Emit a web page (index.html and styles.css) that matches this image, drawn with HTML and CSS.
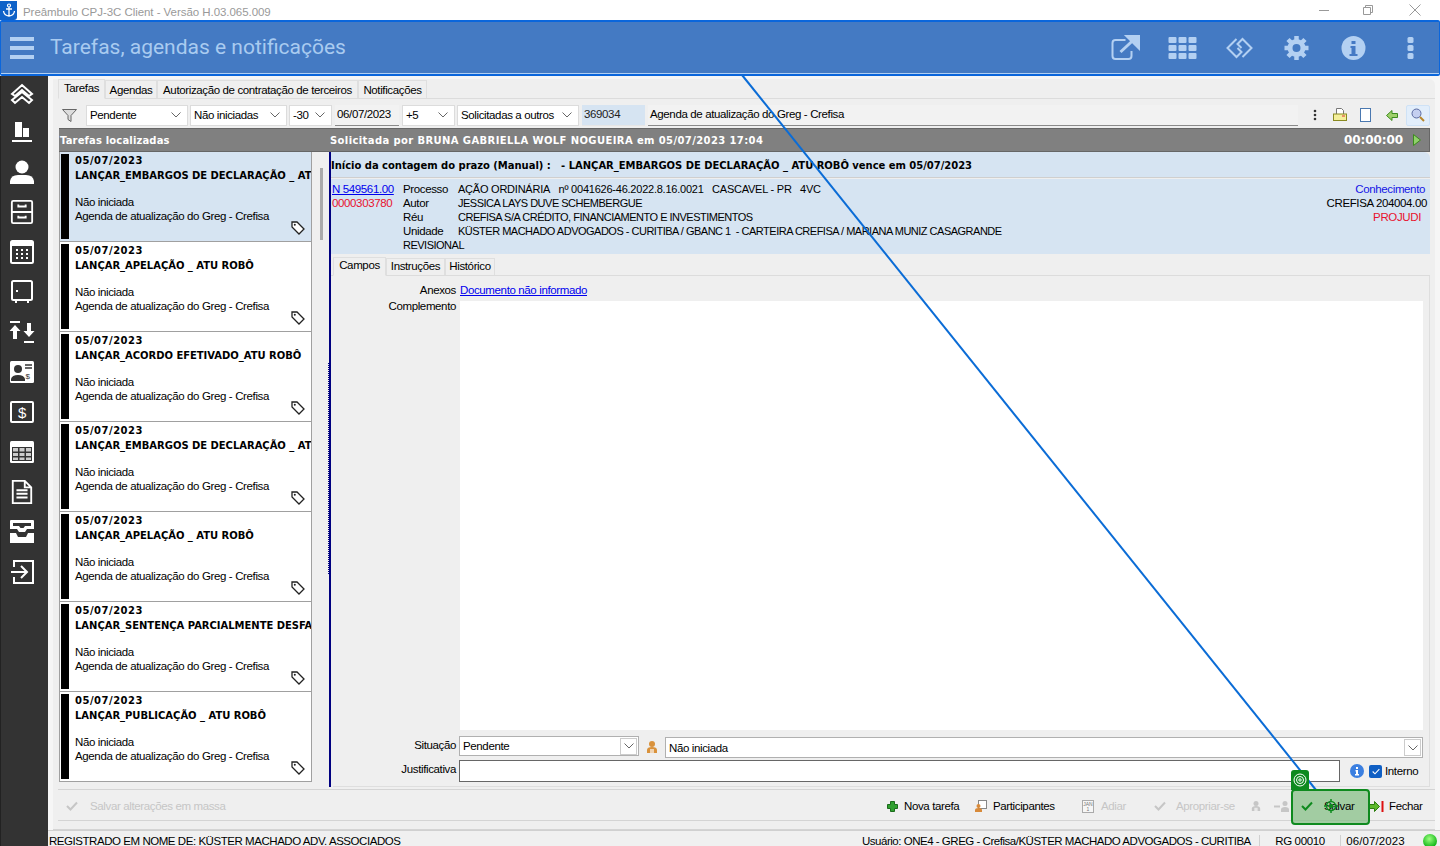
FILE: index.html
```html
<!doctype html>
<html>
<head>
<meta http-equiv="Content-Type" content="text/html; charset=utf-8">
<title>Preâmbulo CPJ-3C Client</title>
<link rel="stylesheet" href="styles.css">
</head>
<body>
<svg class="defs" width="0" height="0">
	<symbol id="chev" viewBox="0 0 12 8"><path d="M1.500 1.500l4.500 4.500 4.500-4.500" fill="none" stroke="#666" stroke-width="1"/></symbol>
	<symbol id="tag" viewBox="0 0 14 14"><path d="M1 1h5l7 7-5 5-7-7z" fill="#fff" stroke="#222" stroke-width="1.300"/><circle cx="3.800" cy="3.800" r="1" fill="#222"/></symbol>
	<symbol id="check" viewBox="0 0 12 10"><path d="M1 5l3.500 3.500 6.500-7" fill="none" stroke="currentColor" stroke-width="2"/></symbol>
	<symbol id="person" viewBox="0 0 12 14"><circle cx="6" cy="4" r="3" fill="currentColor"/><path d="M1 13v-3q0-3 5-3t5 3v3z" fill="currentColor"/><path d="M4 9h4v4H4z" fill="#fff" opacity=".6"/></symbol>
</svg>

<div class="titlebar">
	<div class="anchor"><svg width="14" height="14" viewBox="0 0 14 14"><circle cx="7" cy="2.500" r="1.500" fill="none" stroke="#fff" stroke-width="1.200"/><path d="M7 4v9M4 6h6M1.500 8q.5 4.500 5.500 5 5-.5 5.500-5" fill="none" stroke="#fff" stroke-width="1.300"/></svg></div>
	<span class="titlebar-text">Preâmbulo CPJ-3C Client - Versão H.03.065.009</span>
	<div class="winctl">
		<svg width="12" height="12" viewBox="0 0 12 12"><path d="M1 6.500h10" stroke="#999"/></svg>
		<svg width="12" height="12" viewBox="0 0 12 12"><path d="M1.500 3.500h7v7h-7zM3.500 3.500v-2h7v7h-2" fill="none" stroke="#999"/></svg>
		<svg width="12" height="12" viewBox="0 0 12 12"><path d="M.5.500l11 11M11.500.500l-11 11" stroke="#999"/></svg>
	</div>
</div>

<header class="appbar">
	<div class="burger"><i></i><i></i><i></i></div>
	<h1>Tarefas, agendas e notificações</h1>
	<div class="appbar-icons">
		<svg width="30" height="26" viewBox="0 0 30 26"><path d="M15 5H5q-3 0-3 3v13q0 3 3 3h13q3 0 3-3v-5" fill="none" stroke="#b3d0f2" stroke-width="2"/><path d="M10 17L24 4M17 1.500h11v11z" stroke="#b3d0f2" stroke-width="3" fill="#b3d0f2"/></svg>
		<svg width="28" height="22" viewBox="0 0 28 22" fill="#b3d0f2"><rect width="8" height="6" rx="1"/><rect x="10" width="8" height="6" rx="1"/><rect x="20" width="8" height="6" rx="1"/><rect y="8" width="8" height="6" rx="1"/><rect x="10" y="8" width="8" height="6" rx="1"/><rect x="20" y="8" width="8" height="6" rx="1"/><rect y="16" width="8" height="6" rx="1"/><rect x="10" y="16" width="8" height="6" rx="1"/><rect x="20" y="16" width="8" height="6" rx="1"/></svg>
		<svg width="28" height="24" viewBox="0 0 28 24" fill="none" stroke="#b3d0f2" stroke-width="2"><path d="M11 3L2 12l9 9 5-5-4-4M17 21l9-9-9-9-5 5 4 4"/></svg>
		<svg width="24" height="24" viewBox="0 0 24 24"><circle cx="12" cy="12" r="6.500" fill="none" stroke="#b3d0f2" stroke-width="5"/><path d="M12 0v24M0 12h24M3.500 3.500l17 17M20.500 3.500l-17 17" stroke="#b3d0f2" stroke-width="4.500" stroke-dasharray="4.500 15 4.500"/></svg>
		<svg width="24" height="24" viewBox="0 0 24 24"><circle cx="12" cy="12" r="12" fill="#b3d0f2"/><path d="M10 5h4v3h-4zM9 10h5v8h2v2H8v-2h2v-6H9z" fill="#4479c4"/></svg>
		<svg width="6" height="22" viewBox="0 0 6 22" fill="#b3d0f2"><rect width="6" height="6" rx="1.500"/><rect y="8" width="6" height="6" rx="1.500"/><rect y="16" width="6" height="6" rx="1.500"/></svg>
	</div>
</header>

<div class="main">
	<nav class="sidebar">
		<svg width="24" height="22" viewBox="0 0 24 22" fill="none" stroke="#fff" stroke-width="2"><path d="M2 11l10-9 10 9-3 2-7-6-7 6zM2 17l10-8 10 8-3 3-7-6-7 6z"/></svg>
		<svg width="20" height="20" viewBox="0 0 20 20" fill="#fff"><rect x="3" width="7" height="15"/><rect x="11" y="6" width="6" height="9"/><rect y="18" width="20" height="2"/></svg>
		<svg width="24" height="24" viewBox="0 0 24 24" fill="#fff"><circle cx="12" cy="7" r="6.500"/><path d="M0 24v-3q1-6 8-6h8q7 0 8 6v3z"/></svg>
		<svg width="24" height="26" viewBox="0 0 24 26" fill="none" stroke="#fff" stroke-width="2"><rect x="1" y="1" width="22" height="24" rx="1.500"/><path d="M1 13h22M8 5v2h8V5M8 17v2h8v-2"/></svg>
		<svg width="24" height="24" viewBox="0 0 24 24"><rect x="1" y="1" width="22" height="22" rx="1.500" fill="none" stroke="#fff" stroke-width="2"/><path d="M2 2h20v4H2z" fill="#fff"/><path d="M6 9h2v2H6zM11 9h2v2h-2zM16 9h2v2h-2zM6 13h2v2H6zM11 13h2v2h-2zM16 13h2v2h-2zM6 17h2v2H6zM11 17h2v2h-2zM16 17h2v2h-2z" fill="#fff"/></svg>
		<svg width="24" height="24" viewBox="0 0 24 24" fill="none" stroke="#fff" stroke-width="2"><rect x="2" y="1" width="20" height="19" rx="1.500"/><path d="M6 20v3M18 20v3"/><path d="M6 10h2v2H6z" fill="#fff" stroke="none"/></svg>
		<svg width="24" height="22" viewBox="0 0 24 22" fill="#fff"><path d="M0 0h10v2H0zM14 20h10v2H14zM5 4l5.500 6H7v8H3v-8H-.500zM17 2h4v8h3.500L19 16l-5.500-6H17z"/></svg>
		<svg width="24" height="22" viewBox="0 0 24 22"><rect width="24" height="22" rx="1.500" fill="#fff"/><circle cx="8" cy="8" r="4" fill="#333"/><path d="M1 20v-2q1-4 7-4t7 4v2z" fill="#333"/><path d="M15 4h7M15 7h7" stroke="#333" stroke-width="1.500"/><text class="icon-dollar" x="15.500" y="18">$</text></svg>
		<svg width="24" height="22" viewBox="0 0 24 22"><rect x="1" y="1" width="22" height="20" rx="1" fill="none" stroke="#fff" stroke-width="2"/><text class="icon-dollar-big" x="12" y="17">$</text></svg>
		<svg width="24" height="24" viewBox="0 0 24 24"><rect x="0" y="1" width="24" height="22" rx="1.500" fill="#fff"/><path d="M2 7h20v14H2z" fill="#333"/><path d="M3 8h5v3.500H3zM9.500 8h5v3.500h-5zM16 8h5v3.500h-5zM3 13h5v3H3zM9.500 13h5v3h-5zM16 13h5v3h-5zM3 17.500h5V20H3zM9.500 17.500h5V20h-5zM16 17.500h5V20h-5z" fill="#ccc"/></svg>
		<svg width="24" height="26" viewBox="0 0 24 26" fill="none" stroke="#fff" stroke-width="2"><path d="M2 1h13l7 7v17H2zM15 1v7h7"/><path d="M6 11h12M6 15h12M6 19h12" stroke-width="2.200"/></svg>
		<svg width="24" height="24" viewBox="0 0 24 24" fill="#fff"><path d="M1 0h22a1 1 0 0 1 1 1v8h-7l-2 3H9L7 9H0V1a1 1 0 0 1 1-1z"/><path d="M0 13h6l2 4h8l2-4h6v10H0z"/><path d="M3 3h18v3h-6l-1.500 2h-3L9 6H3z" fill="#333"/></svg>
		<svg width="24" height="24" viewBox="0 0 24 24" fill="none" stroke="#fff" stroke-width="2"><path d="M4 7V1h19v22H4v-6"/><path d="M1 12h15M11 6l6 6-6 6"/></svg>
	</nav>

	<div class="content">
		<div class="pane">
			<div class="tabs">
				<a class="tab tab-on">Tarefas</a>
				<a class="tab w-agendas">Agendas</a>
				<a class="tab w-autor">Autorização de contratação de terceiros</a>
				<a class="tab w-notif">Notificações</a>
			</div>

			<div class="filters">
				<svg class="funnel" width="15" height="13" viewBox="0 0 15 13"><path d="M.500.500h14L9 6.500v6l-3-2v-4z" fill="#ddd" stroke="#666"/></svg>
				<div class="sel f1"><span>Pendente</span><svg width="12" height="8"><use href="#chev"/></svg></div>
				<div class="sel f2"><span>Não iniciadas</span><svg width="12" height="8"><use href="#chev"/></svg></div>
				<div class="sel f3"><span>-30</span><svg width="12" height="8"><use href="#chev"/></svg></div>
				<div class="inp f4">06/07/2023</div>
				<div class="sel f5"><span>+5</span><svg width="12" height="8"><use href="#chev"/></svg></div>
				<div class="sel f6"><span>Solicitadas a outros</span><svg width="12" height="8"><use href="#chev"/></svg></div>
				<div class="inp f7">369034</div>
				<div class="inp f8">Agenda de atualização do Greg - Crefisa</div>
				<div class="tools">
					<svg width="4" height="12" viewBox="0 0 4 12" fill="#333"><circle cx="2" cy="2" r="1.300"/><circle cx="2" cy="6" r="1.300"/><circle cx="2" cy="10" r="1.300"/></svg>
					<svg width="14" height="14" viewBox="0 0 14 14"><path d="M3.500 6V.500h5l2 2V6" fill="#fff" stroke="#777"/><rect x=".500" y="6" width="13" height="6.500" fill="#f4ef9a" stroke="#8a8a20"/><path d="M9 8h3" stroke="#d33"/></svg>
					<svg width="12" height="15" viewBox="0 0 12 15"><rect x=".500" y=".500" width="10" height="13" fill="#fff" stroke="#4a78b0"/></svg>
					<svg width="12" height="11" viewBox="0 0 12 11"><path d="M.500 5.500L6 .500v3h5.500v4H6v3z" fill="#9ed06a" stroke="#3c8a1e"/></svg>
					<div class="searchbtn"><svg width="14" height="14" viewBox="0 0 14 14"><circle cx="5.500" cy="5.500" r="4.500" fill="#c4cff0" stroke="#5a6aa0"/><path d="M9 9l4 4" stroke="#b8862a" stroke-width="2"/></svg></div>
				</div>
			</div>

			<div class="darkbar">
				<b class="darkbar-left">Tarefas localizadas</b>
				<b class="darkbar-mid">Solicitada por BRUNA GABRIELLA WOLF NOGUEIRA em 05/07/2023 17:04</b>
				<b class="timer">00:00:00</b>
				<svg width="8" height="12" viewBox="0 0 8 12"><path d="M.500.500L7.500 6 .500 11.500z" fill="#8fd06a" stroke="#3c8a1e"/></svg>
			</div>

			<div class="split">
				<div class="list">
					<div class="item item-on">
						<div class="bar"></div>
						<div class="item-body">
							<b class="item-date">05/07/2023</b>
							<b>LANÇAR_EMBARGOS DE DECLARAÇÃO _ ATU ROBÔ</b>
							<span class="item-status">Não iniciada</span>
							<span>Agenda de atualização do Greg - Crefisa</span>
						</div>
						<svg class="tag" width="14" height="14"><use href="#tag"/></svg>
					</div>
					<div class="item">
						<div class="bar"></div>
						<div class="item-body">
							<b class="item-date">05/07/2023</b>
							<b>LANÇAR_APELAÇÃO _ ATU ROBÔ</b>
							<span class="item-status">Não iniciada</span>
							<span>Agenda de atualização do Greg - Crefisa</span>
						</div>
						<svg class="tag" width="14" height="14"><use href="#tag"/></svg>
					</div>
					<div class="item">
						<div class="bar"></div>
						<div class="item-body">
							<b class="item-date">05/07/2023</b>
							<b>LANÇAR_ACORDO EFETIVADO_ATU ROBÔ</b>
							<span class="item-status">Não iniciada</span>
							<span>Agenda de atualização do Greg - Crefisa</span>
						</div>
						<svg class="tag" width="14" height="14"><use href="#tag"/></svg>
					</div>
					<div class="item">
						<div class="bar"></div>
						<div class="item-body">
							<b class="item-date">05/07/2023</b>
							<b>LANÇAR_EMBARGOS DE DECLARAÇÃO _ ATU ROBÔ</b>
							<span class="item-status">Não iniciada</span>
							<span>Agenda de atualização do Greg - Crefisa</span>
						</div>
						<svg class="tag" width="14" height="14"><use href="#tag"/></svg>
					</div>
					<div class="item">
						<div class="bar"></div>
						<div class="item-body">
							<b class="item-date">05/07/2023</b>
							<b>LANÇAR_APELAÇÃO _ ATU ROBÔ</b>
							<span class="item-status">Não iniciada</span>
							<span>Agenda de atualização do Greg - Crefisa</span>
						</div>
						<svg class="tag" width="14" height="14"><use href="#tag"/></svg>
					</div>
					<div class="item">
						<div class="bar"></div>
						<div class="item-body">
							<b class="item-date">05/07/2023</b>
							<b>LANÇAR_SENTENÇA PARCIALMENTE DESFAVORÁVEL</b>
							<span class="item-status">Não iniciada</span>
							<span>Agenda de atualização do Greg - Crefisa</span>
						</div>
						<svg class="tag" width="14" height="14"><use href="#tag"/></svg>
					</div>
					<div class="item">
						<div class="bar"></div>
						<div class="item-body">
							<b class="item-date">05/07/2023</b>
							<b>LANÇAR_PUBLICAÇÃO _ ATU ROBÔ</b>
							<span class="item-status">Não iniciada</span>
							<span>Agenda de atualização do Greg - Crefisa</span>
						</div>
						<svg class="tag" width="14" height="14"><use href="#tag"/></svg>
					</div>
				</div>
				<div class="gutter"><div class="thumb"></div></div>

				<div class="detail">
					<div class="detail-head"><b>Início da contagem do prazo (Manual) :&nbsp;&nbsp; - LANÇAR_EMBARGOS DE DECLARAÇÃO _ ATU ROBÔ vence em 05/07/2023</b></div>
					<div class="info">
						<div class="info-ids">
							<a class="link" href="#">N 549561.00</a>
							<span class="red">0000303780</span>
						</div>
						<div class="info-grid">
							<span>Processo</span><span class="proc">AÇÃO ORDINÁRIA&nbsp;&nbsp; nº 0041626-46.2022.8.16.0021&nbsp;&nbsp; CASCAVEL - PR&nbsp;&nbsp; 4VC</span>
							<span>Autor</span><span class="caps">JESSICA LAYS DUVE SCHEMBERGUE</span>
							<span>Réu</span><span class="caps">CREFISA S/A CRÉDITO, FINANCIAMENTO E INVESTIMENTOS</span>
							<span>Unidade</span><span class="caps">KÜSTER MACHADO ADVOGADOS - CURITIBA / GBANC 1&nbsp; - CARTEIRA CREFISA / MARIANA MUNIZ CASAGRANDE</span>
							<span class="full caps">REVISIONAL</span>
						</div>
						<div class="info-right">
							<span class="blue">Conhecimento</span>
							<span>CREFISA 204004.00</span>
							<span class="red r-pad">PROJUDI</span>
						</div>
					</div>
					<div class="tabs tabs-sub">
						<a class="tab tab-on">Campos</a>
						<a class="tab w-instr">Instruções</a>
						<a class="tab w-hist">Histórico</a>
					</div>
					<div class="form">
						<div class="row row-anexos"><label>Anexos</label><a class="link" href="#">Documento não informado</a></div>
						<div class="row row-compl"><label>Complemento</label><div class="memo"></div></div>
						<div class="row row-sit">
							<label>Situação</label>
							<div class="sel s1"><span>Pendente</span><div class="dropbtn"><svg width="12" height="8"><use href="#chev"/></svg></div></div>
							<svg class="lock" width="12" height="14"><use href="#person"/></svg>
							<div class="sel s2"><span>Não iniciada</span><div class="dropbtn"><svg width="12" height="8"><use href="#chev"/></svg></div></div>
						</div>
						<div class="row row-just">
							<label>Justificativa</label>
							<div class="just"></div>
							<svg class="info-ico" width="14" height="14" viewBox="0 0 14 14"><circle cx="7" cy="7" r="7" fill="#3b7fe0"/><path d="M6 3h2v2H6zM5.500 6H8v4h1v1.500H5V10h1V7.500h-.5z" fill="#fff"/></svg>
							<div class="checkbox"><svg width="8" height="7" viewBox="0 0 12 10"><path d="M1 5l3.500 3.500 6.500-7" fill="none" stroke="#fff" stroke-width="1.600"/></svg></div>
							<span>Interno</span>
						</div>
					</div>
				</div>
			</div>

			<div class="toolbar">
				<svg class="t-off t1" width="12" height="10" viewBox="0 0 12 10"><use href="#check"/></svg>
				<span class="off t2">Salvar alterações em massa</span>
				<div class="t-right">
					<svg width="11" height="11" viewBox="0 0 11 11"><path d="M3.500.500h4v3h3v4h-3v3h-4v-3h-3v-4h3z" fill="#2fa02f" stroke="#1b6b1b"/></svg>
					<span class="t-nova">Nova tarefa</span>
					<svg width="12" height="12" viewBox="0 0 12 12"><rect x="3.500" y=".500" width="8" height="8" fill="#fff" stroke="#888"/><circle cx="3.500" cy="6" r="2" fill="#d88a3a"/><path d="M0 12V10q0-2 3.500-2T7 10v2z" fill="#d88a3a"/></svg>
					<span class="t-parttx">Participantes</span>
					<svg width="12" height="13" viewBox="0 0 12 13"><rect x=".500" y=".500" width="11" height="12" fill="#f6f6f6" stroke="#aaa"/><text class="cal-txt" x="6" y="5.500">JAN</text><text class="cal-txt" x="6" y="11">1</text></svg>
					<span class="off t-adiartx">Adiar</span>
					<svg class="t-off" width="12" height="10" viewBox="0 0 12 10"><use href="#check"/></svg>
					<span class="off t-aproptx">Apropriar-se</span>
					<svg class="t-off" width="10" height="12" viewBox="0 0 12 14"><use href="#person"/></svg>
					<svg class="t-off t-p2" width="16" height="12" viewBox="0 0 16 12"><path d="M0 6.500h6" stroke="currentColor" stroke-width="2"/><circle cx="11" cy="3.500" r="2.500" fill="currentColor"/><path d="M7 12V9.500Q7 7 11 7t4 2.500V12z" fill="currentColor"/></svg>
					<svg class="t-fechar" width="15" height="11" viewBox="0 0 15 11"><path d="M.500 3.500h5v-3l5 5-5 5v-3h-5z" fill="#5cb82a" stroke="#2c7d0e"/><path d="M13.500 0v11" stroke="#d11" stroke-width="2"/></svg>
					<span class="t-fechartx">Fechar</span>
				</div>
			</div>
		</div>

		<footer class="status">
			<span class="st-reg">REGISTRADO EM NOME DE: KÜSTER MACHADO ADV. ASSOCIADOS</span>
			<span class="st-user">Usuário: ONE4 - GREG - Crefisa/KÜSTER MACHADO ADVOGADOS - CURITIBA</span>
			<span class="st-rg">RG 00010</span>
			<span class="st-date">06/07/2023</span>
			<i class="led"></i>
		</footer>
	</div>
</div>

<!-- overlay do guia -->
<svg class="guide-line" width="1440" height="846"><path d="M742 75L1316 790" stroke="#0b6cd6" stroke-width="2" fill="none"/></svg>
<div class="guide-badge"><svg width="14" height="14" viewBox="0 0 14 14" fill="none" stroke="#fff"><circle cx="7" cy="7" r="6"/><circle cx="7" cy="7" r="3.500"/><circle cx="7" cy="7" r="1.200"/></svg></div>
<div class="guide-box">
	<svg class="guide-check" width="12" height="10" viewBox="0 0 12 10"><use href="#check"/></svg>
	<span>Salvar</span>
	<svg class="guide-target" width="14" height="14" viewBox="0 0 14 14" fill="none" stroke="#0e8a1e" stroke-width="1.500"><circle cx="7" cy="7" r="4.500"/><circle cx="7" cy="7" r="1.500" fill="#0e8a1e"/><path d="M7 0v3M7 11v3M0 7h3M11 7h3"/></svg>
</div>
</body>
</html>
```

FILE: styles.css
```css
*{
	box-sizing:border-box;
}
html,body{
	margin:0;
	height:100%;
}
body{
	width:1440px;
	height:846px;
	overflow:hidden;
	position:relative;
	display:flex;
	flex-direction:column;
	background:#fff;
	font-family:"Liberation Sans",Arial,sans-serif;
	font-size:11.500px;
	letter-spacing:-.37px;
	color:#000;
}
b{
	font-family:"DejaVu Sans",sans-serif;
	font-weight:bold;
	font-size:10px;
	letter-spacing:-.03px;
}
.defs{
	position:absolute;
}

/* barra de titulo */
.titlebar{
	height:20px;
	flex:none;
	display:flex;
	align-items:center;
	background:#fff;
}
.anchor{
	width:17px;
	height:19px;
	background:#0f62c8;
	border-radius:0 0 3px 0;
	display:flex;
	align-items:center;
	justify-content:center;
}
.titlebar-text{
	margin-left:6px;
	padding-top:3px;
	color:#999;
	letter-spacing:-.05px;
}
.winctl{
	margin-left:auto;
	padding-right:19px;
	display:flex;
	gap:35px;
}
.winctl svg:first-child{
	margin-left:3px;
	margin-right:-3px;
}

/* barra azul */
.appbar{
	height:56px;
	flex:none;
	display:flex;
	align-items:center;
	background:#447ac3;
	border:solid #0a66dc;
	border-width:2px 1px 2px 1px;
	box-shadow:inset 0 -1px 0 #b3d0f2;
	border-radius:2px;
}
.burger{
	margin-left:9px;
	width:24px;
	display:flex;
	flex-direction:column;
	gap:5px;
}
.burger i{
	display:block;
	height:4px;
	background:#b3d0f2;
}
.appbar h1{
	margin:0 0 3px 16px;
	font-family:Roboto,"Noto Sans",sans-serif;
	font-weight:normal;
	font-size:21px;
	letter-spacing:0;
	color:#a9cbf0;
}
.appbar-icons{
	margin-left:auto;
	display:flex;
	align-items:center;
}
.appbar-icons svg{
	width:57px;
	flex:none;
}

.main{
	flex:1;
	display:flex;
	min-height:0;
}
.sidebar{
	width:48px;
	flex:none;
	background:#333;
	border-left:1px solid #222;
	display:flex;
	flex-direction:column;
	align-items:center;
	padding:0 5px 0 0;
}
.sidebar svg{
	height:40px;
	flex:none;
	padding:8px 0;
	overflow:visible;
}
.sidebar svg:first-child,
.sidebar svg:nth-child(2){
	margin-top:-2px;
}
.icon-dollar{
	font-size:8px;
	fill:#333;
	font-family:"Liberation Sans",sans-serif;
}
.icon-dollar-big{
	font-size:15px;
	fill:#fff;
	text-anchor:middle;
	font-family:"Liberation Sans",sans-serif;
}
.cal-txt{
	font-size:5px;
	letter-spacing:0;
	fill:#777;
	text-anchor:middle;
	font-family:"Liberation Sans",sans-serif;
}

.content{
	flex:1;
	min-width:0;
	display:flex;
	flex-direction:column;
	background:#f6f6f6;
}
.pane{
	flex:1;
	min-height:0;
	margin:3px 5px 0 5px;
	background:#efefef;
	border-radius:0 6px 0 0;
	border-bottom:1px solid #d4d4d4;
	display:flex;
	flex-direction:column;
	padding:0 0 8px 5px;
}

/* abas */
.tabs{
	height:20px;
	flex:none;
	display:flex;
	align-items:flex-end;
	border-bottom:1px solid #dcdcdc;
}
.tab{
	height:18px;
	line-height:18px;
	padding:0;
	text-align:center;
	border:1px solid #dfdfdf;
	border-bottom:none;
	white-space:nowrap;
}
.tab-on{
	height:20px;
	line-height:16px;
	width:47px;
	background:#efefef;
	border-bottom:1px solid #efefef;
	margin-bottom:-1px;
}
.w-agendas{
	width:52px;
}
.w-autor{
	width:201px;
}
.w-notif{
	width:69px;
}

/* filtros */
.filters{
	height:29px;
	flex:none;
	display:flex;
	align-items:center;
	padding-top:3px;
	padding-left:4px;
}
.funnel{
	margin-right:9px;
	flex:none;
}
.sel{
	height:21px;
	display:flex;
	align-items:center;
	justify-content:space-between;
	background:#fff;
	border:1px solid #dcdcdc;
	padding:0 5px 0 3px;
	flex:none;
}
.f1{
	width:102px;
	margin-right:2px;
}
.f2{
	width:97px;
	margin-right:2px;
}
.f3{
	width:43px;
	margin-right:3px;
}
.f5{
	width:53px;
	margin-right:2px;
}
.f6{
	width:122px;
	margin-right:3px;
}
.inp{
	height:21px;
	line-height:18px;
	padding:0 2px;
	border-bottom:1px solid #8a8a8a;
	flex:none;
}
.f4{
	width:64px;
	margin-right:3px;
	background:#f2f2f2;
}
.f7{
	width:63px;
	margin-right:3px;
	background:#d6e4f2;
	border-bottom-color:#e6e6e6;
	color:#222;
}
.f8{
	width:650px;
	background:#f2f2f2;
}
.tools{
	display:flex;
	align-items:center;
	margin-left:15px;
}
.tools svg{
	flex:none;
}
.tools > svg:nth-child(2){
	margin-left:16px;
}
.tools > svg:nth-child(3){
	margin-left:13px;
}
.tools > svg:nth-child(4){
	margin-left:14px;
}
.searchbtn{
	width:24px;
	height:21px;
	margin-left:8px;
	background:#e2eefb;
	border:1px solid #cfe2f6;
	border-radius:2px;
	display:flex;
	align-items:center;
	justify-content:center;
}

/* barra cinza */
.darkbar{
	height:24px;
	flex:none;
	margin-right:5px;
	margin-left:1px;
	background:#808080;
	border:solid #666;
	border-width:1px 1px 1px 0;
	color:#fff;
	display:flex;
	align-items:center;
}
.darkbar b{
	letter-spacing:.39px;
}
.darkbar .darkbar-left{
	width:271px;
	padding-left:1px;
	letter-spacing:.15px;
}
.darkbar-mid{
	flex:1;
}
.darkbar .timer{
	margin-right:10px;
	font-size:12px;
	letter-spacing:-.1px;
}
.darkbar svg{
	margin-right:8px;
	flex:none;
}

/* lista */
.split{
	flex:1;
	min-height:0;
	display:flex;
	margin-right:5px;
	margin-left:1px;
}
.list{
	width:253px;
	flex:none;
	overflow:hidden;
}
.item{
	height:90px;
	position:relative;
	display:flex;
	background:#fff;
	border:solid #a0a0a0;
	border-width:0 1px 1px 1px;
	padding:2px 0 2px 1px;
	overflow:hidden;
}
.item-on{
	background:#d6e4f2;
}
.bar{
	width:8px;
	background:#000;
	flex:none;
}
.item-body{
	padding-left:6px;
	display:flex;
	flex-direction:column;
	white-space:nowrap;
	line-height:14px;
	min-width:0;
}
.item-body b{
	height:15px;
	line-height:14px;
}
.item-body .item-date{
	letter-spacing:.5px;
}
.item-status{
	margin-top:11px;
}
.tag{
	position:absolute;
	right:6px;
	bottom:6px;
}
.gutter{
	width:17px;
	flex:none;
	position:relative;
	padding:16px 0 0 8px;
}
.gutter::after{
	content:"";
	position:absolute;
	right:0;
	top:210px;
	width:1px;
	height:213px;
	background:repeating-linear-gradient(#efefef 0 1px,#000080 1px 2px);
}
.thumb{
	width:3px;
	height:72px;
	background:#aaa;
}

/* detalhe */
.detail{
	flex:1;
	min-width:0;
	border-left:2px solid #000080;
	display:flex;
	flex-direction:column;
	background:#efefef;
}
.detail-head{
	height:26px;
	flex:none;
	line-height:26px;
	background:#d6e4f2;
	border-bottom:1px solid #cfcfcf;
	border-radius:0 6px 0 0;
	white-space:nowrap;
}
.info{
	height:75px;
	flex:none;
	margin-top:1px;
	background:#d6e4f2;
	display:flex;
	line-height:14px;
	padding-top:3px;
	white-space:nowrap;
}
.info-ids{
	width:72px;
	flex:none;
	display:flex;
	flex-direction:column;
	padding-left:1px;
}
.link{
	color:#0000ee;
	text-decoration:underline;
}
.red{
	color:#e8112d;
}
.blue{
	color:#1414e6;
	margin-right:2px;
}
.info-grid{
	display:grid;
	grid-template-columns:55px 1fr;
	grid-auto-rows:14px;
}
.full{
	grid-column:1 / 3;
}
.caps{
	font-size:11px;
	letter-spacing:-.5px;
}
.proc{
	font-size:11px;
	letter-spacing:-.23px;
}
.info-right{
	margin-left:auto;
	display:flex;
	flex-direction:column;
	align-items:flex-end;
	padding-right:3px;
}
.r-pad{
	padding-right:6px;
}
.tabs-sub{
	margin:3px 0 0 0;
	height:19px;
	padding-left:2px;
}
.tabs-sub .tab{
	height:17px;
	line-height:15px;
}
.tabs-sub .tab-on{
	width:53px;
	height:19px;
	line-height:14px;
}
.tabs-sub .w-instr{
	width:59px;
}
.w-hist{
	width:50px;
}
.form{
	flex:1;
	min-height:0;
	margin-left:2px;
	border:solid #dedede;
	border-width:0 1px 1px 0;
	display:flex;
	flex-direction:column;
	padding:7px 6px 4px 0;
}
.row{
	display:flex;
	flex:none;
	white-space:nowrap;
}
.row label{
	width:123px;
	flex:none;
	margin-right:4px;
	text-align:right;
}
.row-anexos{
	height:18px;
	align-items:flex-start;
	line-height:14px;
}
.row-compl{
	flex:1;
	min-height:0;
	line-height:14px;
	padding-bottom:6px;
}
.row-compl label{
	margin-top:-2px;
}
.memo{
	flex:1;
	background:#fff;
}
.row-sit{
	height:24px;
	align-items:flex-start;
}
.row-sit label{
	line-height:19px;
	margin-right:3px;
}
.row-sit .sel{
	height:20px;
	border:1px solid #b0b0b0;
	padding:0 1px 0 3px;
}
.s1{
	width:180px;
}
.row-sit .s2{
	flex:1;
	height:21px;
	margin-top:1px;
}
.dropbtn{
	width:17px;
	height:17px;
	background:#fff;
	border:1px solid #ccc;
	display:flex;
	align-items:center;
	justify-content:center;
}
.lock{
	margin:4px 7px 0 7px;
	color:#d9923c;
	flex:none;
}
.row-just{
	height:22px;
	align-items:center;
}
.row-just label{
	align-self:flex-start;
	line-height:18px;
	margin-right:3px;
}
.just{
	width:881px;
	height:22px;
	background:#fff;
	border:1px solid #666;
	flex:none;
}
.info-ico{
	margin-left:10px;
	flex:none;
}
.checkbox{
	width:13px;
	height:13px;
	margin:0 3px 0 5px;
	background:#0f5fc4;
	border-radius:2px;
	display:flex;
	align-items:center;
	justify-content:center;
}

/* rodape */
.toolbar{
	height:32px;
	flex:none;
	margin-top:2px;
	display:flex;
	align-items:center;
	border:solid #d4d4d4;
	border-width:1px 0;
	white-space:nowrap;
	padding-top:2px;
}
.off{
	color:#c6c6c6;
}
.t-off{
	color:#c6c6c6;
	flex:none;
}
.t1{
	margin-left:8px;
}
.t2{
	margin-left:12px;
}
.t-right{
	margin-left:auto;
	display:flex;
	align-items:center;
	padding-right:13px;
}
.t-right svg{
	flex:none;
}
.t-right span{
	flex:none;
}
.t-nova{
	width:56px;
	margin:0 15px 0 6px;
}
.t-parttx{
	width:61px;
	margin:0 28px 0 6px;
}
.t-adiartx{
	width:24px;
	margin:0 29px 0 7px;
}
.t-aproptx{
	width:56px;
	margin:0 19px 0 10px;
}
.t-p2{
	margin-left:13px;
}
.t-fechar{
	margin-left:79px;
}
.t-fechartx{
	width:33px;
	margin-left:5px;
}
.status{
	height:16px;
	flex:none;
	display:flex;
	align-items:center;
	border-top:1px solid #d0d0d0;
	background:#f0f0f0;
	white-space:nowrap;
	padding-top:4px;
	line-height:12px;
}
.st-reg{
	flex:1;
	letter-spacing:-.45px;
	padding-left:1px;
}
.st-user{
	width:397px;
	letter-spacing:-.48px;
}
.st-rg,.st-date{
	border-left:1px solid #d0d0d0;
	text-align:center;
	flex:none;
}
.st-rg{
	width:81px;
}
.st-date{
	width:70px;
	letter-spacing:.1px;
}
.led{
	width:14px;
	height:14px;
	margin:0 3px 0 13px;
	border-radius:50%;
	background:radial-gradient(circle at 45% 35%,#9dff80,#13b81a 70%);
	flex:none;
}

/* guia sobreposto */
.guide-line{
	position:absolute;
	left:0;
	top:0;
	pointer-events:none;
}
.guide-badge{
	position:absolute;
	left:1291px;
	top:770px;
	width:18px;
	height:20px;
	background:#0e8a1e;
	border-radius:3px 3px 0 0;
	display:flex;
	align-items:center;
	justify-content:center;
}
.guide-box{
	position:absolute;
	left:1291px;
	top:789px;
	width:79px;
	height:36px;
	background:rgba(130,190,130,.7);
	border:2px solid #0e8a1e;
	border-radius:4px;
	display:flex;
	align-items:center;
	padding-bottom:2px;
}
.guide-check{
	margin-left:8px;
	color:#0e8a1e;
	flex:none;
}
.guide-box span{
	margin-left:11px;
}
.guide-target{
	position:absolute;
	left:31px;
	top:8px;
}
```
